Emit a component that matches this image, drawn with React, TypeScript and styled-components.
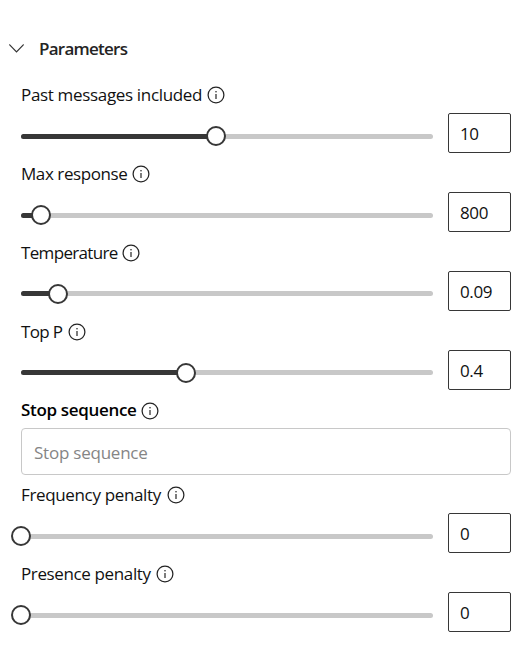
import React from "react";
import styled, { createGlobalStyle } from "styled-components";

const GlobalStyle = createGlobalStyle`
  * { box-sizing: border-box; }
  body {
    margin: 0;
    background: #fff;
    color: #111;
    font-family: "Open Sans", "Noto Sans", sans-serif;
    font-size: 17px;
  }
`;

const Panel = styled.section`
  width: 522px;
  height: 667px;
  padding: 29px 11px 0 21px;
  overflow: hidden;
`;

const Header = styled.header`
  display: flex;
  align-items: center;
  gap: 14px;
  height: 40px;
  margin: 0 0 8px -13px;
`;

const Title = styled.h2`
  margin: 0;
  font-size: 17px;
  line-height: 24px;
  font-weight: 600;
  color: #242424;
  letter-spacing: -0.75px;
`;

const Field = styled.div`
  height: 79px;
`;

const TextField = styled.div`
  height: 84px;
`;

const LabelRow = styled.div<{ $height?: number }>`
  display: flex;
  align-items: center;
  height: ${(p) => p.$height ?? 36}px;
`;

const Label = styled.label<{ $width: number; $spacing: number; $strong?: boolean }>`
  width: ${(p) => p.$width}px;
  margin-right: 4.5px;
  padding-bottom: 1px;
  line-height: 24px;
  white-space: nowrap;
  color: ${(p) => (p.$strong ? "#000" : "#111")};
  font-weight: ${(p) => (p.$strong ? 600 : 400)};
  letter-spacing: ${(p) => p.$spacing}px;
`;

const Controls = styled.div`
  display: flex;
  gap: 15px;
  height: 40px;
`;

const Slider = styled.div`
  position: relative;
  width: 412px;
  height: 40px;
`;

const Rail = styled.div<{ $top: number }>`
  height: 5px;
  margin-top: ${(p) => p.$top}px;
  border-radius: 3px;
  background: #c8c8c8;
  overflow: hidden;
`;

const Fill = styled.div<{ $length: number }>`
  width: ${(p) => p.$length}px;
  height: 5px;
  background: #373737;
`;

const Thumb = styled.div<{ $at: number }>`
  position: absolute;
  top: 13px;
  left: ${(p) => p.$at - 10}px;
  width: 20px;
  height: 20px;
  border: 2px solid #373737;
  border-radius: 50%;
  background: #fff;
`;

const ValueBox = styled.input`
  width: 63px;
  height: 40px;
  padding: 1px 0 0 11px;
  border: 1px solid #373737;
  border-radius: 2px;
  outline: none;
  background: #fff;
  color: #111;
  font: inherit;
  letter-spacing: -0.35px;
`;

const StopInput = styled.input`
  display: block;
  width: 490px;
  height: 47px;
  padding: 1px 12px 0;
  border: 1px solid #c8c8c8;
  border-radius: 4px;
  outline: none;
  font: inherit;
  letter-spacing: -0.23px;
  &::placeholder { color: #858585; opacity: 1; }
`;

const InfoIcon = () => (
  <svg width="18" height="18" viewBox="0 0 18 18" fill="none" stroke="#242424">
    <circle cx="9" cy="9" r="7.9" strokeWidth="1.25" />
    <path d="M9 8.1v4.8" strokeWidth="1.2" />
    <circle cx="9" cy="5.7" r="0.8" fill="#242424" stroke="none" />
  </svg>
);

const Chevron = () => (
  <svg width="17" height="18" viewBox="0 0 17 18" fill="none" stroke="#333" strokeWidth="1.2" strokeLinecap="round">
    <path d="M1.7 4.8 8.5 12l6.8-7.2" />
  </svg>
);

interface Parameter {
  label: string;
  width: number;
  spacing: number;
  at: number;
  value: string;
  railTop: number;
}

const sampling: Parameter[] = [
  { label: "Past messages included", width: 181.5, spacing: -0.33, at: 195, value: "10", railTop: 21 },
  { label: "Max response", width: 106.5, spacing: -0.42, at: 20, value: "800", railTop: 21 },
  { label: "Temperature", width: 96.5, spacing: -0.66, at: 37, value: "0.09", railTop: 20 },
  { label: "Top P", width: 42, spacing: -0.64, at: 165, value: "0.4", railTop: 20 },
];

const penalties: Parameter[] = [
  { label: "Frequency penalty", width: 141, spacing: -0.35, at: 0, value: "0", railTop: 21 },
  { label: "Presence penalty", width: 130, spacing: -0.37, at: 0, value: "0", railTop: 21 },
];

const ParameterField = ({ label, width, spacing, at, value, railTop }: Parameter) => (
  <Field>
    <LabelRow>
      <Label $width={width} $spacing={spacing}>{label}</Label>
      <InfoIcon />
    </LabelRow>
    <Controls>
      <Slider>
        <Rail $top={railTop}>
          <Fill $length={at} />
        </Rail>
        <Thumb $at={at} />
      </Slider>
      <ValueBox defaultValue={value} aria-label={label} />
    </Controls>
  </Field>
);

export default function App() {
  return (
    <>
      <GlobalStyle />
      <Panel>
        <Header>
          <Chevron />
          <Title>Parameters</Title>
        </Header>
        {sampling.map((p) => (
          <ParameterField key={p.label} {...p} />
        ))}
        <TextField>
          <LabelRow $height={35}>
            <Label $width={115.5} $spacing={-0.32} $strong>Stop sequence</Label>
            <InfoIcon />
          </LabelRow>
          <StopInput placeholder="Stop sequence" />
        </TextField>
        {penalties.map((p) => (
          <ParameterField key={p.label} {...p} />
        ))}
      </Panel>
    </>
  );
}
